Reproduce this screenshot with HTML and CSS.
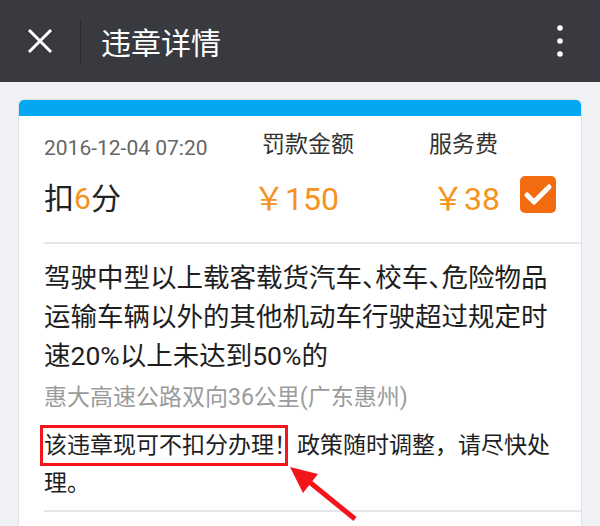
FILE: index.html
```html
<!DOCTYPE html>
<html lang="zh-CN">
<head>
    <meta charset="UTF-8">
    <meta name="viewport" content="width=device-width, initial-scale=1.0">
    <title>违章详情</title>
    <link rel="stylesheet" href="styles.css">
</head>
<body>
    <header class="topbar">
        <svg class="topbar-close" width="26" height="26" viewBox="0 0 26 26">
            <path d="M2 2 L24 24 M24 2 L2 24" stroke="#fff" stroke-width="3" fill="none"/>
        </svg>
        <span class="topbar-sep"></span>
        <h1 class="topbar-title">违章详情</h1>
        <svg class="topbar-more" width="8" height="34" viewBox="0 0 8 34">
            <circle cx="4" cy="4" r="2.8" fill="#fff"/>
            <circle cx="4" cy="17" r="2.8" fill="#fff"/>
            <circle cx="4" cy="30" r="2.8" fill="#fff"/>
        </svg>
    </header>

    <main class="page">
        <section class="card">
            <div class="card-stripe"></div>

            <div class="summary">
                <span class="date">2016-12-04 07:20</span>
                <span class="label label-fine">罚款金额</span>
                <span class="label label-fee">服务费</span>
                <span></span>
                <span class="points">扣<em>6</em>分</span>
                <span class="amount amount-fine">￥150</span>
                <span class="amount amount-fee">￥38</span>
                <span class="check">
                    <svg width="36" height="37" viewBox="0 0 36 37">
                        <path d="M7 19 L14 26 L29 11" stroke="#fff" stroke-width="5" stroke-linecap="round" stroke-linejoin="round" fill="none"/>
                    </svg>
                </span>
            </div>

            <div class="detail">
                <p class="detail-desc">驾驶中型以上载客载货汽车<span class="punct">、</span>校车<span class="punct">、</span>危险物品运输车辆以外的其他机动车行驶超过规定时速20%以上未达到50%的</p>
                <p class="detail-place">惠大高速公路双向36公里(广东惠州)</p>
                <p class="detail-note">
                    <span class="highlight">该违章现可不扣分办理！</span>政策随时调整，请尽快处理。
                    <svg class="note-arrow" width="120" height="62" viewBox="0 0 120 62">
                        <path d="M23 19 L71 58" stroke="#f4141c" stroke-width="5" fill="none"/>
                        <path d="M6 6 L34 13 L19 32 Z" fill="#f4141c"/>
                    </svg>
                </p>
            </div>
        </section>
    </main>
</body>
</html>
```

FILE: styles.css
```css
body {
    margin: 0;
    height: 526px;
    overflow: hidden;
    background-color: #f1f2f6;
    font-family: Roboto, "Noto Sans CJK SC", sans-serif;
    color: #222;
}
.topbar {
    height: 82px;
    background-color: #393a3f;
    display: flex;
    align-items: center;
    padding-left: 27px;
}
.topbar-close {
    flex: none;
}
.topbar-sep {
    width: 1px;
    height: 43px;
    margin-left: 27px;
    background-color: #2a2b2f;
}
.topbar-title {
    margin: 0 0 0 20px;
    font-size: 30px;
    font-weight: normal;
    color: #fff;
    flex: 1;
}
.topbar-more {
    margin-right: 36px;
}
.page {
    padding: 17px 18px 0;
}
.card {
    box-sizing: border-box;
    height: 427px;
    background: white;
    border: 1px solid #dfe0e4;
    border-bottom: none;
    border-radius: 6px 6px 0 0;
    overflow: hidden;
}
.card-stripe {
    height: 16px;
    background-color: #03a8f0;
}
.summary {
    margin-left: 25px;
    padding: 14px 25px 23px 0;
    border-bottom: 2px solid #e6e6e8;
    display: grid;
    grid-template-columns: 212px 173px 1fr 36px;
    grid-template-rows: 30px 40px;
    row-gap: 19px;
}
.date {
    font-size: 21px;
    line-height: 30px;
    color: #666;
    padding-top: 3px;
}
.label {
    font-size: 23px;
    line-height: 30px;
    color: #333;
}
.label-fine {
    padding-left: 6px;
}
.points {
    font-size: 30px;
    line-height: 40px;
    color: #222;
}
.points em {
    font-style: normal;
    color: #f59220;
}
.amount {
    font-size: 32px;
    line-height: 40px;
    color: #f59220;
}
.amount-fine {
    margin-left: -3px;
}
.amount-fee {
    padding-left: 3px;
}
.check {
    width: 36px;
    height: 37px;
    margin-top: -3px;
    border-radius: 5px;
    background-color: #f26b0f;
    display: flex;
}
.detail {
    margin-left: 25px;
    padding: 14px 25px 7px 0;
    border-bottom: 2px solid #e6e6e8;
}
.detail p {
    margin: 0;
}
.detail-desc {
    font-size: 26.5px;
    line-height: 39px;
    color: #1e1e1e;
}
.punct {
    font-feature-settings: "halt";
}
.detail-place {
    margin-top: 6px !important;
    font-size: 23px;
    line-height: 34px;
    color: #9b9b9b;
}
.detail-note {
    position: relative;
    margin-top: 12px !important;
    font-size: 23px;
    line-height: 38px;
    color: #1e1e1e;
}
.highlight {
    position: relative;
}
.highlight::after {
    content: "";
    position: absolute;
    left: -4px;
    right: 9px;
    top: -7px;
    bottom: -7px;
    border: 3px solid #f4141c;
}
.note-arrow {
    position: absolute;
    left: 240px;
    top: 34px;
}
```
